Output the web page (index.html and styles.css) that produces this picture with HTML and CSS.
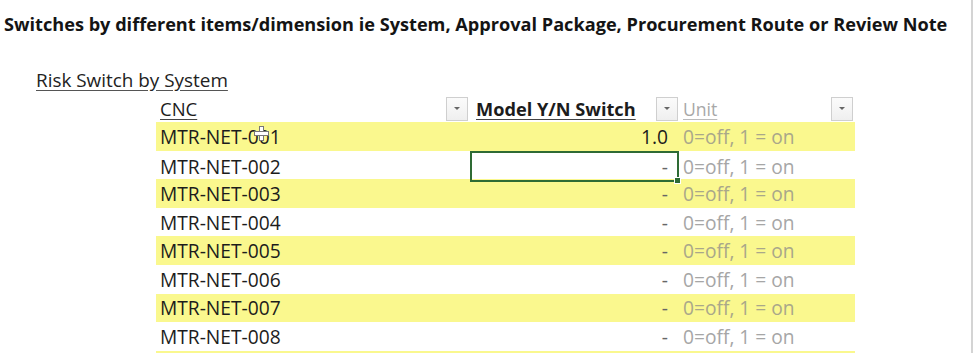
FILE: index.html
```html
<!DOCTYPE html>
<html>
<head>
<meta charset="utf-8">
<link rel="stylesheet" href="styles.css">
</head>
<body>
<div class="frame">
  <h1 class="title">Switches by different items/dimension ie System, Approval Package, Procurement Route or Review Note</h1>
  <div class="section-label">Risk Switch by System</div>
  <div class="table">
    <div class="row head">
      <div class="cell c1"><span class="hdr">CNC</span><span class="dd"></span></div>
      <div class="cell c2"><span class="hdr bold">Model Y/N Switch</span><span class="dd"></span></div>
      <div class="cell c3"><span class="hdr unit-h">Unit</span><span class="dd"></span></div>
    </div>
    <div class="row band">
      <div class="cell c1"><span class="id">MTR-NET-001</span><span class="cursor"></span></div>
      <div class="cell c2 num dark">1.0</div>
      <div class="cell c3 unit">0=off, 1 = on</div>
    </div>
    <div class="row">
      <div class="cell c1">MTR-NET-002</div>
      <div class="cell c2 num selected">-<span class="handle"></span></div>
      <div class="cell c3 unit">0=off, 1 = on</div>
    </div>
    <div class="row band">
      <div class="cell c1">MTR-NET-003</div>
      <div class="cell c2 num">-</div>
      <div class="cell c3 unit">0=off, 1 = on</div>
    </div>
    <div class="row">
      <div class="cell c1">MTR-NET-004</div>
      <div class="cell c2 num">-</div>
      <div class="cell c3 unit">0=off, 1 = on</div>
    </div>
    <div class="row band">
      <div class="cell c1">MTR-NET-005</div>
      <div class="cell c2 num">-</div>
      <div class="cell c3 unit">0=off, 1 = on</div>
    </div>
    <div class="row">
      <div class="cell c1">MTR-NET-006</div>
      <div class="cell c2 num">-</div>
      <div class="cell c3 unit">0=off, 1 = on</div>
    </div>
    <div class="row band">
      <div class="cell c1">MTR-NET-007</div>
      <div class="cell c2 num">-</div>
      <div class="cell c3 unit">0=off, 1 = on</div>
    </div>
    <div class="row">
      <div class="cell c1">MTR-NET-008</div>
      <div class="cell c2 num">-</div>
      <div class="cell c3 unit">0=off, 1 = on</div>
    </div>
    <div class="row band tail"></div>
  </div>
</div>
</body>
</html>
```
FILE: styles.css
```css
html, body {
  margin: 0;
  padding: 0;
  background: #ffffff;
  overflow: hidden;
}
body {
  font-family: "Open Sans", "Liberation Sans", sans-serif;
  color: #1c1c1c;
}
.frame {
  width: 973px;
  height: 353px;
  border-right: 2px solid #d4d4d4;
  box-sizing: border-box;
  overflow: hidden;
}
.title {
  margin: 0;
  padding: 12px 0 0 4px;
  height: 68px;
  box-sizing: border-box;
  font-size: 18.15px;
  font-weight: 700;
  line-height: 24px;
  white-space: nowrap;
  color: #141414;
}
.section-label {
  margin-left: 36px;
  font-size: 18.9px;
  line-height: 24px;
  height: 27px;
  text-decoration: underline;
  text-decoration-color: #555;
  text-underline-offset: 3px;
  color: #222;
}
.table {
  margin-left: 156px;
  width: 699px;
}
.row {
  display: grid;
  grid-template-columns: 314px 209px 176px;
  height: 28.6px;
  align-items: center;
  font-size: 19.2px;
}
.row.head {
  height: 27px;
}
.row.band {
  background: #faf88e;
}
.row.tail {
  height: 4px;
}
.cell {
  position: relative;
  height: 100%;
  display: flex;
  align-items: center;
  box-sizing: border-box;
  white-space: nowrap;
}
.c1 { padding-left: 4px; }
.head .cell { justify-content: space-between; }
.head .c1 { padding-right: 2px; }
.head .c2 { padding-left: 6px; padding-right: 1px; }
.head .c3 { padding-left: 4px; padding-right: 2px; }
.hdr {
  text-decoration: underline;
  text-underline-offset: 3px;
  text-decoration-color: #444;
  font-size: 18.5px;
}
.hdr.bold { font-weight: 700; font-size: 18.2px; }
.unit-h {
  color: #a8a8a8;
  text-decoration-color: #bbb;
  font-size: 17.6px;
}
.dd {
  width: 22px;
  height: 24px;
  box-sizing: border-box;
  border: 1px solid #cfcfcf;
  background: linear-gradient(#fbfbfb, #efefef);
  display: flex;
  align-items: center;
  justify-content: center;
}
.dd::before {
  content: "";
  border-left: 3px solid transparent;
  border-right: 3px solid transparent;
  border-top: 3px solid #666;
}
.num {
  justify-content: flex-end;
  padding-right: 11px;
  color: #666;
}
.num.dark { color: #1c1c1c; }
.unit {
  padding-left: 4px;
  color: #a6a6a6;
}
.band .unit { color: #a9a78a; }
.selected {
  border: 2px solid #2e6b34;
  padding-right: 9px;
}
.handle {
  position: absolute;
  right: -4px;
  bottom: -4px;
  width: 5px;
  height: 5px;
  background: #2e6b34;
  border: 1px solid #fff;
}
.cursor {
  position: absolute;
  left: 98px;
  top: 4px;
  width: 15px;
  height: 15px;
}
.cursor::before, .cursor::after {
  content: "";
  position: absolute;
  background: #fff;
  border: 1px solid #777;
}
.cursor::before { left: 5px; top: 0; width: 3px; height: 13px; }
.cursor::after { left: 0; top: 5px; width: 13px; height: 3px; }
```
